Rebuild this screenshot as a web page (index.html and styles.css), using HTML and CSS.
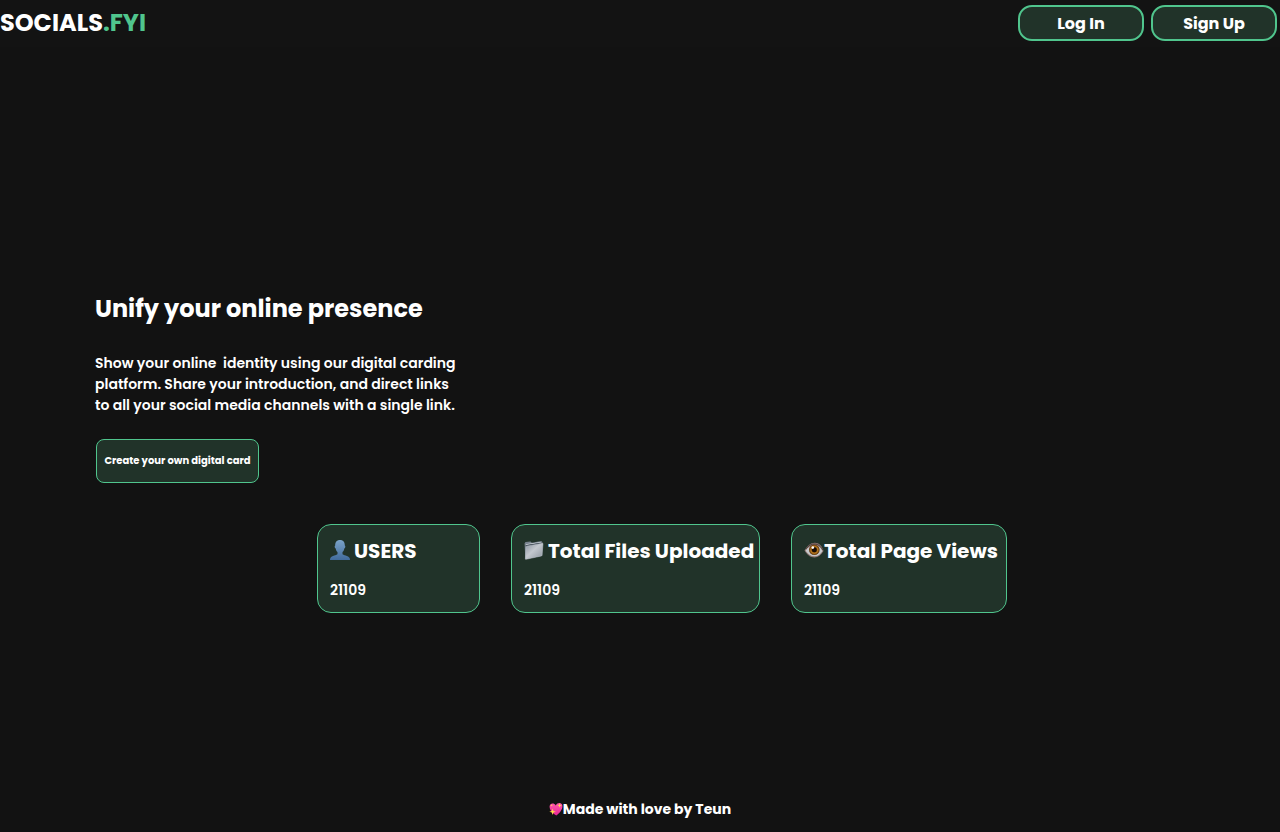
FILE: index.html
```html
<!DOCTYPE html>
<html lang="en">
<head>
<meta charset="utf-8">
<meta name="viewport" content="width=device-width, initial-scale=1">
<title>Socials.fyi</title>
<link rel="stylesheet" href="styles.css">
</head>
<body>
<header class="topbar">
  <a class="brand" href="#">SOCIALS<span class="brand-accent">.FYI</span></a>
  <nav class="actions">
    <button class="button" type="button">Log In</button>
    <button class="button" type="button">Sign Up</button>
  </nav>
</header>
<main class="main">
  <section class="hero">
    <h1 class="hero-title">Unify your online presence</h1>
    <p class="hero-text">Show your online&nbsp; identity using our digital carding<br>platform. Share your introduction, and direct links<br>to all your social media channels with a single link.</p>
    <button class="cta" type="button">Create your own digital card</button>
  </section>
  <section class="stats">
    <article class="card card-users">
      <h2 class="card-title card-title-spaced">
        <svg class="icon" viewBox="0 0 20 20" aria-hidden="true">
          <defs><linearGradient id="user" x1="0" y1="0" x2="0" y2="1"><stop offset="0" stop-color="#7ba3c8"/><stop offset="1" stop-color="#416b9b"/></linearGradient></defs>
          <path fill="url(#user)" d="M10 0C6.800 0 5.100 2.200 5.200 5.500C4.300 5.600 4.600 8.200 5.700 8.500C6 10.200 6.600 11.300 7.500 12.100V14C7.300 15.300 1.500 15.400.4 18C.1 18.700 0 19.300 0 20H20C20 19.300 19.900 18.700 19.600 18C18.500 15.400 12.700 15.300 12.500 14V12.100C13.400 11.300 14 10.200 14.300 8.500C15.400 8.200 15.700 5.600 14.800 5.500C14.900 2.200 13.200 0 10 0Z"/>
        </svg>
        <span>USERS</span>
      </h2>
      <p class="card-value">21109</p>
    </article>
    <article class="card card-files">
      <h2 class="card-title card-title-spaced">
        <svg class="icon" viewBox="0 0 20 20" aria-hidden="true">
          <defs><linearGradient id="folder" x1="0" y1="0" x2="1" y2="1"><stop offset="0" stop-color="#87919b"/><stop offset=".45" stop-color="#c3c8ce"/><stop offset="1" stop-color="#8c949d"/></linearGradient></defs>
          <path fill="#78838e" d="M.6 3.200L1.500 2.100L6.500 1.500L7.800 2.700L17.200 1.100L18.300 1.900V15.800L1.300 19.200Z"/>
          <path fill="#d8dee3" d="M1.600 4.200L16.800 2L17.500 2.700L2.300 5.300Z"/>
          <path fill="#3f4a54" d="M1.600 5L17.600 2.600V4.200L2 7Z"/>
          <path fill="url(#folder)" stroke="#bac2ca" stroke-width=".5" d="M2.600 6.200L18.700 3.300Q19.100 3.300 19 3.900L18 15.200Q17.900 15.800 17.300 16L2 19.300Q1.300 19.400 1.400 18.700L2 6.900Q2.100 6.300 2.600 6.200Z"/>
        </svg>
        <span>Total Files Uploaded</span>
      </h2>
      <p class="card-value">21109</p>
    </article>
    <article class="card card-views">
      <h2 class="card-title">
        <svg class="icon" viewBox="0 0 20 20" aria-hidden="true">
          <defs><radialGradient id="iris"><stop offset=".25" stop-color="#603000"/><stop offset=".65" stop-color="#b8791f"/><stop offset="1" stop-color="#4d2909"/></radialGradient></defs>
          <path fill="#8d7773" d="M.5 10.500C3.500 5.800 6.500 2.800 10.800 2.800C15 2.800 18.300 6.300 19.500 11C17 15.300 14.300 17.500 10.500 17.500C6 17.500 3 14.700 .5 10.500Z"/>
          <path fill="#c6c8cb" d="M1.500 10.800C4.300 7.200 7 4.800 10.500 4.800C14.300 4.800 17.200 7.800 18.500 11.200C16.400 14.300 14 16.300 10.500 16.300C6.700 16.300 3.900 14.300 1.500 10.800Z"/>
          <circle cx="10.300" cy="9.800" r="5.300" fill="url(#iris)"/>
          <circle cx="10.300" cy="9.800" r="2.500" fill="#160b05"/>
          <circle cx="8.800" cy="7.600" r="1.300" fill="#fff"/>
          <path fill="none" stroke="#4c3731" stroke-width=".9" d="M2 8.900C5 5.300 7.500 4 10.500 4C14 4 17 6.500 18.700 10"/>
        </svg>
        <span>Total Page Views</span>
      </h2>
      <p class="card-value">21109</p>
    </article>
  </section>
</main>
<footer class="footer">
  <svg class="heart" viewBox="0 0 14 14" aria-hidden="true">
    <defs><linearGradient id="heart" x1="0" y1="0" x2="0" y2="1"><stop offset="0" stop-color="#ff5aaa"/><stop offset="1" stop-color="#e82696"/></linearGradient></defs>
    <path fill="url(#heart)" d="M7.300 13.500C4.500 12 .5 8.500 .6 4.500C.7 1.700 4.500 .2 6.800 3.500C8.500 .1 13 .3 13.400 3.700C13.800 7.500 10 11.800 7.300 13.500Z"/>
    <path fill="#ffd84b" d="M10.600 1.200L11.200 2.900L12.900 3.500L11.200 4.100L10.600 5.800L10 4.100L8.300 3.500L10 2.900ZM3.600 6.400L4.400 8.900L6.900 9.700L4.400 10.500L3.600 13L2.800 10.500L.3 9.700L2.800 8.900ZM2.600 2.200L2.900 3.100L3.800 3.400L2.900 3.700L2.600 4.600L2.300 3.700L1.400 3.400L2.300 3.100Z"/>
  </svg>
  <span>Made with love by Teun</span>
</footer>
</body>
</html>
```
FILE: styles.css
```css
* {
  box-sizing: border-box;
}

body {
  display: flex;
  flex-direction: column;
  min-height: 100vh;
  margin: 0;
  background: #121212;
  color: #fff;
  font-family: Poppins, Inter, sans-serif;
}

h1,
h2,
p {
  margin: 0;
}

button {
  padding: 0;
  background: #213329;
  color: #fff;
  font-family: inherit;
  font-weight: 700;
  cursor: pointer;
}

.topbar {
  display: flex;
  align-items: center;
  justify-content: space-between;
  padding: 5px 3px 6px 0;
  background: #131313;
}

.brand {
  color: #fff;
  font-size: 24px;
  font-weight: 700;
  line-height: 36px;
  text-decoration: none;
}

.brand-accent {
  color: #50c58d;
}

.actions {
  display: flex;
  gap: 7px;
}

.button {
  width: 126px;
  height: 36px;
  border: 2px solid #50c58d;
  border-radius: 14px;
  font-size: 16px;
}

.main {
  flex: 1;
  padding-top: 243px;
}

.hero {
  padding-left: 95px;
}

.hero-title {
  font-size: 24px;
  font-weight: 700;
  line-height: 38px;
}

.hero-text {
  margin-top: 25px;
  font-size: 14px;
  font-weight: 600;
  line-height: 21px;
}

.cta {
  display: block;
  width: 163px;
  height: 44px;
  margin: 23px 0 0 1px;
  border: 1px solid #50c58d;
  border-radius: 8px;
  font-size: 10px;
}

.stats {
  display: flex;
  justify-content: center;
  gap: 31px;
  margin-top: 41px;
  padding-left: 44px;
}

.card {
  padding: 11px 0 11px 12px;
  background: #213329;
  border: 1px solid #50c58d;
  border-radius: 14px;
}

.card-users {
  width: 163px;
}

.card-files {
  width: 249px;
}

.card-views {
  width: 216px;
}

.card-title {
  display: flex;
  align-items: center;
  font-size: 20px;
  font-weight: 700;
  line-height: 30px;
  white-space: nowrap;
}

.card-title-spaced {
  gap: 4px;
}

.icon {
  flex: none;
  width: 20px;
  height: 20px;
  margin-bottom: 3px;
}

.card-value {
  margin-top: 14px;
  font-size: 14px;
  font-weight: 600;
  line-height: 21px;
}

.footer {
  display: flex;
  align-items: center;
  justify-content: center;
  padding-bottom: 12px;
  font-size: 14px;
  font-weight: 700;
  line-height: 21px;
}

.heart {
  width: 14px;
  height: 14px;
  margin-bottom: 2px;
}
```
